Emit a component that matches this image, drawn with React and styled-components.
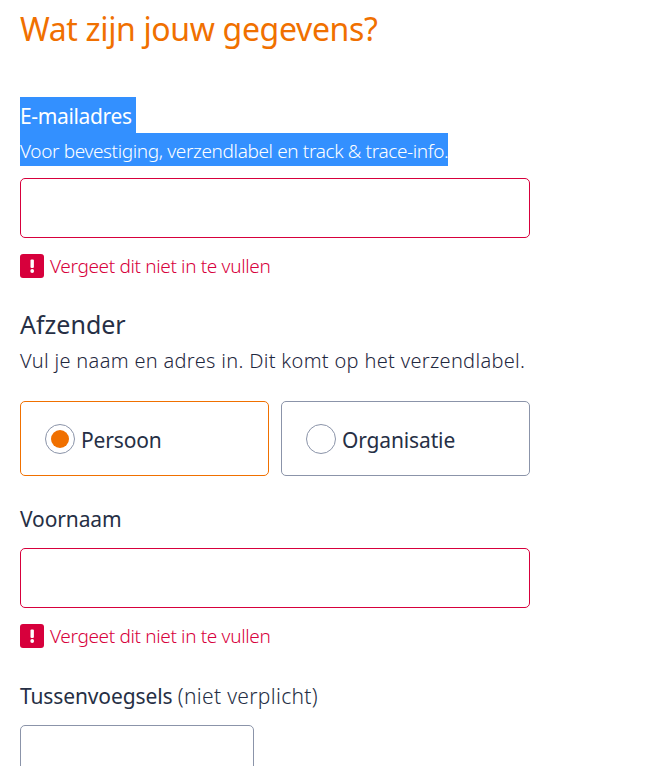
import React from "react";
import styled, { createGlobalStyle } from "styled-components";

const GlobalStyle = createGlobalStyle`
  html, body {
    margin: 0;
    background: #fff;
    overflow: hidden;
  }
  body {
    font-family: "Noto Sans", "Open Sans", sans-serif;
    color: #262f45;
  }
`;

const Page = styled.form`
  display: flex;
  flex-direction: column;
  width: 510px;
  height: 766px;
  padding: 0 0 0 20px;
  overflow: hidden;
`;

const Title = styled.h1`
  margin: 8px 0 47px;
  font-size: 32px;
  line-height: 42px;
  font-weight: 400;
  letter-spacing: -0.35px;
  color: #f07000;
`;

const Selected = styled.div`
  align-self: flex-start;
  box-sizing: border-box;
  background: #3390ff;
  color: #fff;
  height: ${({ $height }) => $height}px;
  line-height: ${({ $height }) => $height + 3}px;
  padding-right: ${({ $pad = 0 }) => $pad}px;
  font-size: ${({ $size }) => $size}px;
  font-weight: ${({ $weight = 300 }) => $weight};
  letter-spacing: ${({ $spacing = 0 }) => $spacing}px;
  white-space: nowrap;
`;

const Input = styled.div`
  box-sizing: border-box;
  width: ${({ $width = 510 }) => $width}px;
  height: 60px;
  flex: none;
  margin-top: ${({ $top = 0 }) => $top}px;
  border: 1px solid ${({ $error }) => ($error ? "#d7003c" : "#8b94a9")};
  border-radius: 5px;
  background: #fff;
`;

const ErrorRow = styled.div`
  display: flex;
  align-items: center;
  gap: 6px;
  height: 24px;
  margin-top: 16px;
  color: #d7003c;
  font-size: 19px;
  font-weight: 300;
  letter-spacing: -0.35px;
`;

const ErrorBadge = styled.svg`
  width: 24px;
  height: 24px;
  flex: none;
`;

const SectionTitle = styled.h2`
  margin: 29px 0 0;
  font-size: 25px;
  line-height: 34px;
  font-weight: 400;
  letter-spacing: 0;
`;

const SectionText = styled.p`
  margin: 4px 0 0;
  font-size: 20px;
  line-height: 32px;
  font-weight: 300;
  letter-spacing: 0.32px;
  color: #1f2840;
`;

const RadioRow = styled.div`
  display: grid;
  grid-template-columns: 249px 249px;
  gap: 12px;
  margin-top: 24px;
`;

const RadioCard = styled.div`
  box-sizing: border-box;
  display: flex;
  align-items: center;
  gap: 6px;
  height: 75px;
  padding-left: 24px;
  border: 1px solid ${({ $checked }) => ($checked ? "#f07000" : "#8b94a9")};
  border-radius: 5px;
  font-size: 21px;
  line-height: 34px;
  font-weight: 400;
  letter-spacing: -0.14px;
`;

const RadioLabel = styled.span`
  padding-top: 2px;
`;

const RadioDot = styled.span`
  box-sizing: border-box;
  display: flex;
  align-items: center;
  justify-content: center;
  width: 30px;
  height: 30px;
  flex: none;
  border: 1px solid #8b94a9;
  border-radius: 50%;

  &::after {
    content: "";
    display: ${({ $checked }) => ($checked ? "block" : "none")};
    width: 18px;
    height: 18px;
    border-radius: 50%;
    background: #f07000;
  }
`;

const Label = styled.div`
  margin-top: ${({ $top }) => $top}px;
  margin-bottom: 14px;
  font-size: 21px;
  line-height: 29px;
  font-weight: 400;
  letter-spacing: -0.12px;
  white-space: nowrap;

  span {
    font-weight: 300;
    letter-spacing: 0.33px;
  }
`;

const FieldError = () => (
  <ErrorRow>
    <ErrorBadge viewBox="0 0 24 24">
      <rect width="24" height="24" rx="3" fill="#d7003c" />
      <rect x="10.5" y="5.5" width="3.4" height="8.5" rx="1" fill="#fff" />
      <circle cx="12.2" cy="17" r="1.9" fill="#fff" />
    </ErrorBadge>
    Vergeet dit niet in te vullen
  </ErrorRow>
);

export default function App() {
  return (
    <>
      <GlobalStyle />
      <Page>
        <Title>Wat zijn jouw gegevens?</Title>
        <Selected $height={36} $size={21} $weight={400} $pad={4} $spacing={-0.35}>E-mailadres</Selected>
        <Selected $height={33} $size={19} $spacing={-0.37}>Voor bevestiging, verzendlabel en track &amp; trace-info.</Selected>
        <Input $error $top={12} />
        <FieldError />
        <SectionTitle>Afzender</SectionTitle>
        <SectionText>Vul je naam en adres in. Dit komt op het verzendlabel.</SectionText>
        <RadioRow>
          <RadioCard $checked>
            <RadioDot $checked />
            <RadioLabel>Persoon</RadioLabel>
          </RadioCard>
          <RadioCard>
            <RadioDot />
            <RadioLabel>Organisatie</RadioLabel>
          </RadioCard>
        </RadioRow>
        <Label $top={29}>Voornaam</Label>
        <Input $error />
        <FieldError />
        <Label $top={34}>Tussenvoegsels <span>(niet verplicht)</span></Label>
        <Input $width={234} />
      </Page>
    </>
  );
}
